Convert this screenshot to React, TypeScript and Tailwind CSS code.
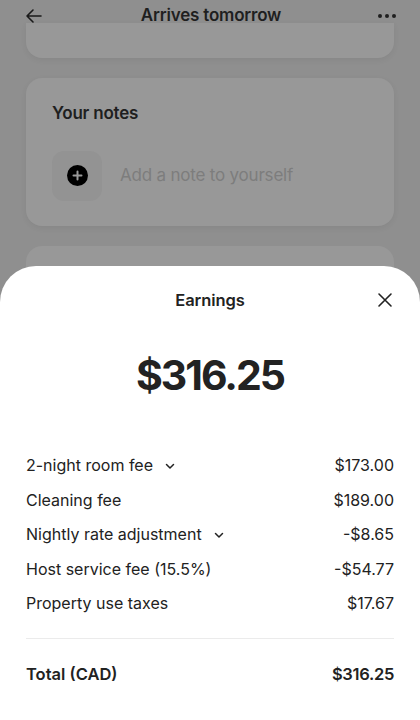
import React from "react";

const font = { fontFamily: "Inter, 'Noto Sans', sans-serif" };

function Chevron() {
  return (
    <svg width="12" height="12" viewBox="0 0 12 12" fill="none" stroke="#222" strokeWidth="1.5" strokeLinecap="round" strokeLinejoin="round" className="ml-[11px] mt-[1px]">
      <path d="M2.5 4.5 6 8l3.5-3.5" />
    </svg>
  );
}

const rows: { label: string; value: string; chevron?: boolean }[] = [
  { label: "2-night room fee", value: "$173.00", chevron: true },
  { label: "Cleaning fee", value: "$189.00" },
  { label: "Nightly rate adjustment", value: "-$8.65", chevron: true },
  { label: "Host service fee (15.5%)", value: "-$54.77" },
  { label: "Property use taxes", value: "$17.67" },
];

export default function App() {
  return (
    <div className="relative w-[420px] h-[720px] overflow-hidden bg-[#8f8f8f] text-[#222]" style={font}>
      {/* Header */}
      <div className="flex items-center justify-between h-[32px] px-[24px]">
        <svg width="20" height="20" viewBox="0 0 20 20" fill="none" stroke="#1a1a1a" strokeWidth="1.6" strokeLinecap="round" strokeLinejoin="round">
          <path d="M17 10H3M9 4l-6 6 6 6" />
        </svg>
        <div className="text-[17px] font-semibold text-[#1f1f1f] tracking-[-0.2px]">Arrives tomorrow</div>
        <div className="flex gap-[3px] items-center w-[18px] justify-center">
          <span className="w-[4px] h-[4px] rounded-full bg-[#1f1f1f]" />
          <span className="w-[4px] h-[4px] rounded-full bg-[#1f1f1f]" />
          <span className="w-[4px] h-[4px] rounded-full bg-[#1f1f1f]" />
        </div>
      </div>
      {/* Cards */}
      <div className="flex flex-col gap-[20px] px-[26px] mt-[-9px]">
        <div className="h-[35px] rounded-b-[16px] bg-[#989898] shadow-[0_2px_6px_rgba(0,0,0,0.06)]" />
        <div className="h-[148px] rounded-[16px] bg-[#989898] shadow-[0_2px_6px_rgba(0,0,0,0.06)] px-[26px] pt-[23px]">
          <div className="text-[17px] font-semibold text-[#1f1f1f] tracking-[-0.2px]">Your notes</div>
          <div className="flex items-center mt-[24px]">
            <div className="w-[50px] h-[50px] rounded-[12px] bg-[#939393] flex items-center justify-center">
              <div className="w-[21px] h-[21px] rounded-full bg-black flex items-center justify-center">
                <svg width="11" height="11" viewBox="0 0 11 11" stroke="#9a9a9a" strokeWidth="2" strokeLinecap="round">
                  <path d="M5.5 1.5v8M1.5 5.5h8" />
                </svg>
              </div>
            </div>
            <div className="ml-[18px] text-[17px] text-[#7d7d7d] tracking-[-0.2px]">Add a note to yourself</div>
          </div>
        </div>
        <div className="h-[60px] rounded-[16px] bg-[#989898]" />
      </div>

      {/* Sheet */}
      <div className="absolute left-0 right-0 top-[266px] bottom-0 bg-white rounded-t-[36px]">
        <div className="relative h-[68px] flex items-center justify-center">
          <div className="text-[16.5px] font-semibold text-[#222] tracking-[-0.1px]">Earnings</div>
          <svg className="absolute right-[27px] top-[26px]" width="16" height="16" viewBox="0 0 16 16" stroke="#222" strokeWidth="1.6" strokeLinecap="round">
            <path d="M2 2l12 12M14 2 2 14" />
          </svg>
        </div>
        <div className="flex justify-center mt-[14px]">
          <div className="text-[41px] font-bold text-[#222] tracking-[-2px] leading-[54px]">$316.25</div>
        </div>
        <div className="px-[26px] mt-[46px] flex flex-col">
          {rows.map((r) => (
            <div key={r.label} className="flex items-center justify-between h-[34.5px] text-[16px] text-[#222]">
              <div className="flex items-center">
                {r.label}
                {r.chevron && <Chevron />}
              </div>
              <div>{r.value}</div>
            </div>
          ))}
        </div>
        <div className="mx-[26px] mt-[17px] h-px bg-[#ebebeb]" />
        <div className="px-[26px] mt-[18px] flex items-center justify-between h-[36px] text-[16.5px] font-semibold text-[#222]">
          <div>Total (CAD)</div>
          <div className="tracking-[-0.3px]">$316.25</div>
        </div>
      </div>
    </div>
  );
}
